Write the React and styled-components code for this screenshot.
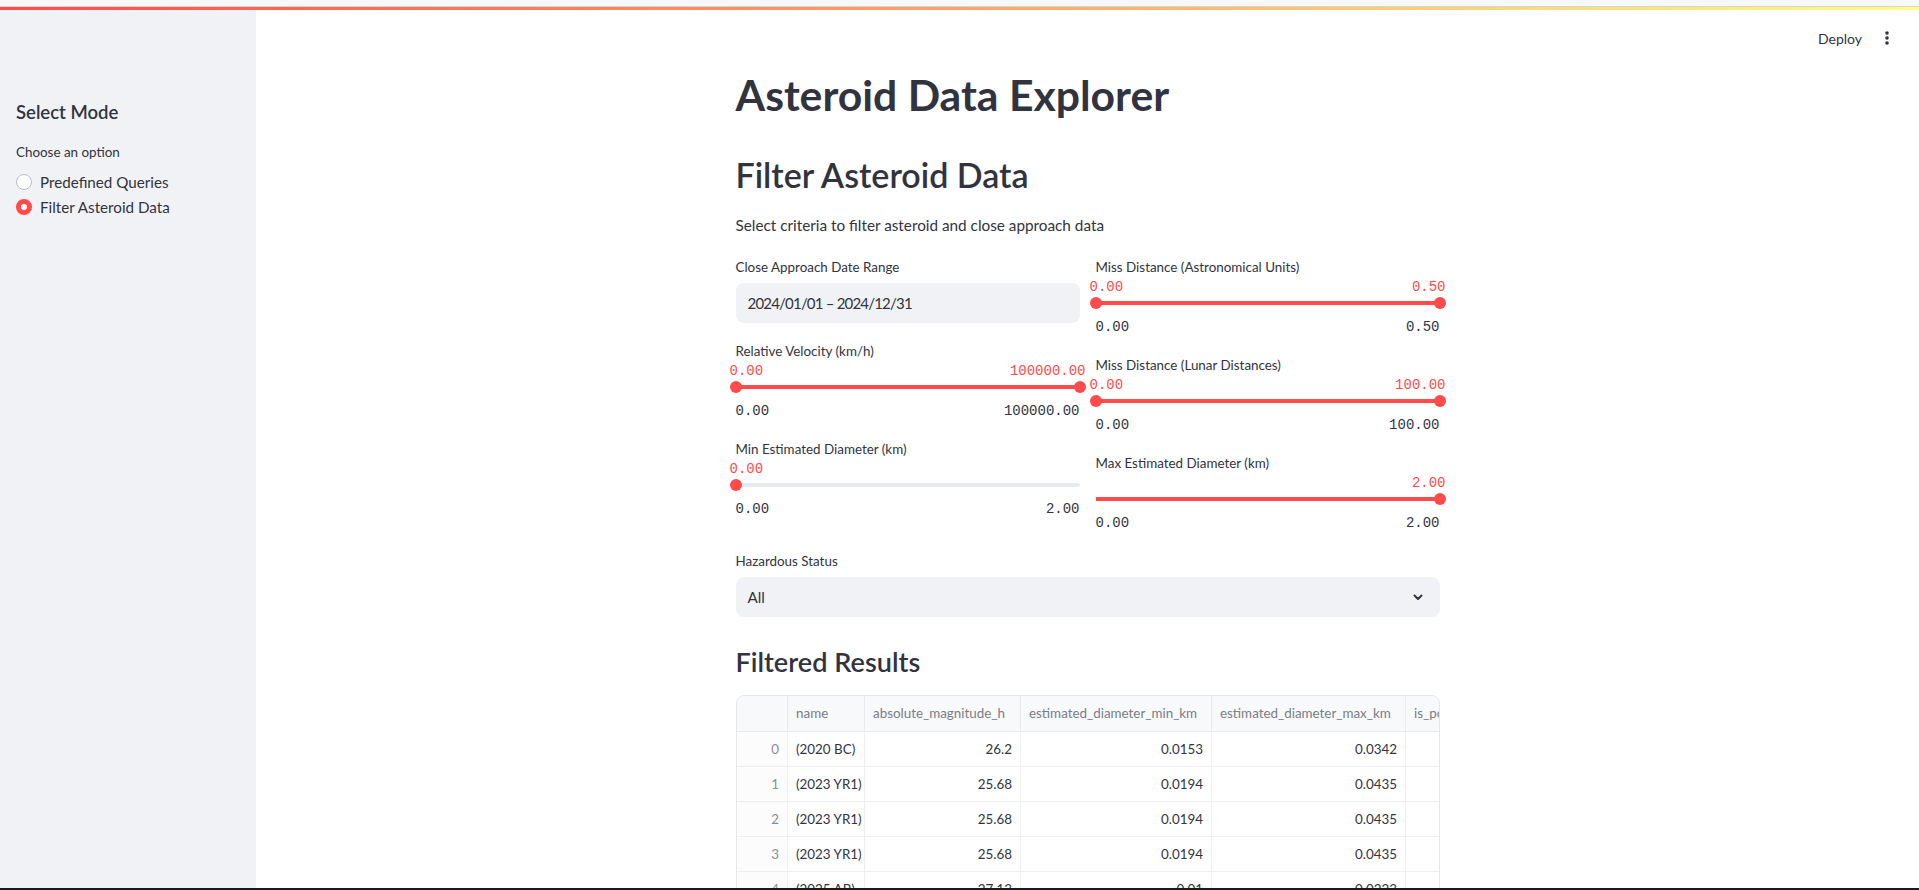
import React from 'react';
import styled, { createGlobalStyle } from 'styled-components';

const GlobalStyle = createGlobalStyle`
  html, body {
    margin: 0;
    padding: 0;
    height: 100%;
    overflow: hidden;
  }
  body {
    font-family: Lato, "Noto Sans", sans-serif;
    color: #31333f;
    background: #fff;
  }
  * {
    box-sizing: border-box;
  }
`;

const RED = '#ff4b4b';
const MONO = '"Liberation Mono", "DejaVu Sans Mono", monospace';

const Page = styled.div`
  height: 890px;
  display: flex;
  flex-direction: column;
`;

const BrowserStrip = styled.div`
  height: 7px;
  flex-shrink: 0;
  background: #f7f8fa;
  border-bottom: 1px solid #d3d4d7;
`;

const Decoration = styled.div`
  height: 3px;
  flex-shrink: 0;
  background: linear-gradient(90deg, #ff4b4b, #fffd80);
`;

const AppBody = styled.div`
  flex: 1;
  min-height: 0;
  display: flex;
  overflow: hidden;
`;

const BottomEdge = styled.div`
  height: 2px;
  flex-shrink: 0;
  background: #1c1c1c;
`;

/* ---------- sidebar ---------- */

const Sidebar = styled.aside`
  width: 256px;
  flex-shrink: 0;
  background: #f0f2f6;
  padding: 88px 16px 0;
`;

const SideTitle = styled.h3`
  margin: 0 0 16px;
  font-size: 18.5px;
  line-height: 28px;
  font-weight: 600;
`;

const WidgetLabel = styled.div`
  font-size: 13.4px;
  line-height: ${p => p.$tall ? '24px' : '20px'};
  height: ${p => p.$tall ? '24px' : '20px'};
  margin-bottom: ${p => p.$gap || 0}px;
  white-space: nowrap;
`;

const RadioList = styled.div`
  display: flex;
  flex-direction: column;
  gap: 1px;
  margin-top: 8px;
`;

const RadioRow = styled.label`
  display: flex;
  align-items: center;
  gap: 8px;
  height: 24px;
  font-size: 15.2px;
`;

const RadioDot = styled.span`
  width: 16px;
  height: 16px;
  border-radius: 50%;
  flex-shrink: 0;
  background: #fff;
  border: ${p => p.$checked ? `5px solid ${RED}` : '1px solid #b9bdc6'};
`;

/* ---------- main ---------- */

const Main = styled.main`
  flex: 1;
  min-width: 0;
  display: flex;
  flex-direction: column;
  overflow: hidden;
`;

const TopBar = styled.header`
  height: 56px;
  flex-shrink: 0;
  display: flex;
  align-items: center;
  justify-content: flex-end;
  gap: 15px;
  padding-right: 22px;
`;

const DeployButton = styled.span`
  font-size: 14px;
  color: #31333f;
`;

const Content = styled.div`
  width: 704px;
  margin: 0 auto;
  padding-top: 3px;
  display: flex;
  flex-direction: column;
`;

const Title = styled.h1`
  margin: 0;
  font-size: 42.7px;
  line-height: 52px;
  font-weight: 700;
`;

const Heading = styled.h2`
  margin: 32px 0 0;
  font-size: 34px;
  line-height: 44px;
  font-weight: 600;
`;

const SubHeading = styled.h3`
  margin: 16px 0 0;
  padding-top: 12px;
  font-size: 27.1px;
  line-height: 34px;
  font-weight: 600;
`;

const Caption = styled.p`
  margin: 16px 0 18px;
  font-size: 15.3px;
  line-height: 24px;
`;

const Columns = styled.div`
  display: grid;
  grid-template-columns: 1fr 1fr;
  gap: 16px;
  align-items: start;
`;

const Stack = styled.div`
  display: flex;
  flex-direction: column;
  gap: 16px;
`;

const Field = styled.div`
  display: flex;
  flex-direction: column;
  margin-top: ${p => p.$offset || 0}px;
`;

const InputBox = styled.div`
  height: 40px;
  border-radius: 8px;
  background: #f0f2f6;
  display: flex;
  align-items: center;
  justify-content: space-between;
  padding: 0 16px 0 12px;
  font-size: 15.2px;
`;

const DateText = styled.span`
  font-size: 15px;
  letter-spacing: -0.8px;
`;

/* ---------- slider ---------- */

const ValueRow = styled.div`
  position: relative;
  height: 16px;
`;

const ThumbValue = styled.span`
  position: absolute;
  top: 0;
  font-family: ${MONO};
  font-size: 14px;
  line-height: 16px;
  color: ${RED};
  white-space: nowrap;
`;

const TrackRow = styled.div`
  position: relative;
  height: 16px;
`;

const Rail = styled.div`
  position: absolute;
  left: 0;
  right: 0;
  top: 6px;
  height: 4px;
  border-radius: 2px;
  background: #e6e9ef;
`;

const Fill = styled.div`
  position: absolute;
  top: 6px;
  height: 4px;
  background: ${RED};
`;

const Thumb = styled.div`
  position: absolute;
  top: 2px;
  width: 12px;
  height: 12px;
  margin-left: -6px;
  border-radius: 50%;
  background: ${RED};
`;

const TickRow = styled.div`
  display: flex;
  justify-content: space-between;
  margin-top: 6px;
  height: 20px;
  line-height: 20px;
  font-family: ${MONO};
  font-size: 14px;
  color: #31333f;
`;

const Slider = ({ label, min, max, value }) => {
  const values = Array.isArray(value) ? value : [value];
  const pct = v => ((v - min) / (max - min)) * 100;
  const from = values.length > 1 ? pct(values[0]) : 0;
  const to = pct(values[values.length - 1]);
  return (
    <Field>
      <WidgetLabel $tall>{label}</WidgetLabel>
      <ValueRow>
        {values.map((v, i) => {
          const p = pct(v);
          const pos = p < 50
            ? { left: `calc(${p}% - 6px)` }
            : { right: `calc(${100 - p}% - 6px)` };
          return <ThumbValue key={i} style={pos}>{v.toFixed(2)}</ThumbValue>;
        })}
      </ValueRow>
      <TrackRow>
        <Rail />
        <Fill style={{ left: `${from}%`, width: `${to - from}%` }} />
        {values.map((v, i) => (
          <Thumb key={i} style={{ left: `${pct(v)}%` }} />
        ))}
      </TrackRow>
      <TickRow>
        <span>{min.toFixed(2)}</span>
        <span>{max.toFixed(2)}</span>
      </TickRow>
    </Field>
  );
};

/* ---------- table ---------- */

const GridWrap = styled.div`
  margin-top: 16px;
  width: 100%;
  border: 1px solid #e6e7ea;
  border-radius: 8px;
  overflow: hidden;
  flex-shrink: 0;
`;

const Grid = styled.table`
  border-collapse: collapse;
  table-layout: fixed;
  width: 900px;
  font-size: 13.4px;
`;

const HeadCell = styled.th`
  height: 35px;
  padding: 0 8px;
  text-align: left;
  font-weight: 400;
  color: #7a7d86;
  background: #f8f9fb;
  border-right: 1px solid #e9eaed;
  border-bottom: 1px solid #e9eaed;
  white-space: nowrap;
  overflow: hidden;
`;

const Cell = styled.td`
  height: 35px;
  padding: 0 8px;
  text-align: ${p => p.$align || 'left'};
  color: ${p => p.$muted ? '#8a8c94' : '#31333f'};
  background: ${p => p.$muted ? '#fcfcfd' : '#fff'};
  border-right: 1px solid #eeeff1;
  border-bottom: 1px solid #eeeff1;
  white-space: nowrap;
  overflow: hidden;
`;

const columns = [
  { key: 'idx', title: '', width: 51 },
  { key: 'name', title: 'name', width: 77 },
  { key: 'mag', title: 'absolute_magnitude_h', width: 156 },
  { key: 'dmin', title: 'estimated_diameter_min_km', width: 191 },
  { key: 'dmax', title: 'estimated_diameter_max_km', width: 194 },
  { key: 'haz', title: 'is_potentially_hazardous_asteroid', width: 231 },
];

const rows = [
  { name: '(2020 BC)', mag: '26.2', dmin: '0.0153', dmax: '0.0342' },
  { name: '(2023 YR1)', mag: '25.68', dmin: '0.0194', dmax: '0.0435' },
  { name: '(2023 YR1)', mag: '25.68', dmin: '0.0194', dmax: '0.0435' },
  { name: '(2023 YR1)', mag: '25.68', dmin: '0.0194', dmax: '0.0435' },
  { name: '(2025 AB)', mag: '27.13', dmin: '0.01', dmax: '0.0223' },
  { name: '(2024 AC)', mag: '26.91', dmin: '0.0111', dmax: '0.0247' },
];

const ResultsTable = () => (
  <GridWrap>
    <Grid>
      <colgroup>
        {columns.map(c => <col key={c.key} style={{ width: c.width }} />)}
      </colgroup>
      <thead>
        <tr>
          {columns.map(c => <HeadCell key={c.key}>{c.title}</HeadCell>)}
        </tr>
      </thead>
      <tbody>
        {rows.map((r, i) => (
          <tr key={i}>
            <Cell $align="right" $muted>{i}</Cell>
            <Cell>{r.name}</Cell>
            <Cell $align="right">{r.mag}</Cell>
            <Cell $align="right">{r.dmin}</Cell>
            <Cell $align="right">{r.dmax}</Cell>
            <Cell />
          </tr>
        ))}
      </tbody>
    </Grid>
  </GridWrap>
);

const KebabIcon = () => (
  <svg width="20" height="20" viewBox="0 0 20 20">
    <circle cx="10" cy="5" r="1.8" fill="#31333f" />
    <circle cx="10" cy="10" r="1.8" fill="#31333f" />
    <circle cx="10" cy="15" r="1.8" fill="#31333f" />
  </svg>
);

const Chevron = () => (
  <svg width="12" height="12" viewBox="0 0 12 12">
    <path d="M2.5 4.5 L6 8 L9.5 4.5" fill="none" stroke="#31333f" strokeWidth="2" strokeLinecap="round" strokeLinejoin="round" />
  </svg>
);

export default function App() {
  return (
    <Page>
      <GlobalStyle />
      <BrowserStrip />
      <Decoration />
      <AppBody>
        <Sidebar>
          <SideTitle>Select Mode</SideTitle>
          <WidgetLabel>Choose an option</WidgetLabel>
          <RadioList>
            <RadioRow><RadioDot />Predefined Queries</RadioRow>
            <RadioRow><RadioDot $checked />Filter Asteroid Data</RadioRow>
          </RadioList>
        </Sidebar>
        <Main>
          <TopBar>
            <DeployButton>Deploy</DeployButton>
            <KebabIcon />
          </TopBar>
          <Content>
            <Title>Asteroid Data Explorer</Title>
            <Heading>Filter Asteroid Data</Heading>
            <Caption>Select criteria to filter asteroid and close approach data</Caption>
            <Columns>
              <Stack>
                <Field>
                  <WidgetLabel $tall $gap={4}>Close Approach Date Range</WidgetLabel>
                  <InputBox><DateText>2024/01/01 – 2024/12/31</DateText></InputBox>
                </Field>
                <Slider label="Relative Velocity (km/h)" min={0} max={100000} value={[0, 100000]} />
                <Slider label="Min Estimated Diameter (km)" min={0} max={2} value={0} />
              </Stack>
              <Stack>
                <Slider label="Miss Distance (Astronomical Units)" min={0} max={0.5} value={[0, 0.5]} />
                <Slider label="Miss Distance (Lunar Distances)" min={0} max={100} value={[0, 100]} />
                <Slider label="Max Estimated Diameter (km)" min={0} max={2} value={2} />
              </Stack>
            </Columns>
            <Field $offset={16}>
              <WidgetLabel $tall $gap={4}>Hazardous Status</WidgetLabel>
              <InputBox>All<Chevron /></InputBox>
            </Field>
            <SubHeading>Filtered Results</SubHeading>
            <ResultsTable />
          </Content>
        </Main>
      </AppBody>
      <BottomEdge />
    </Page>
  );
}
